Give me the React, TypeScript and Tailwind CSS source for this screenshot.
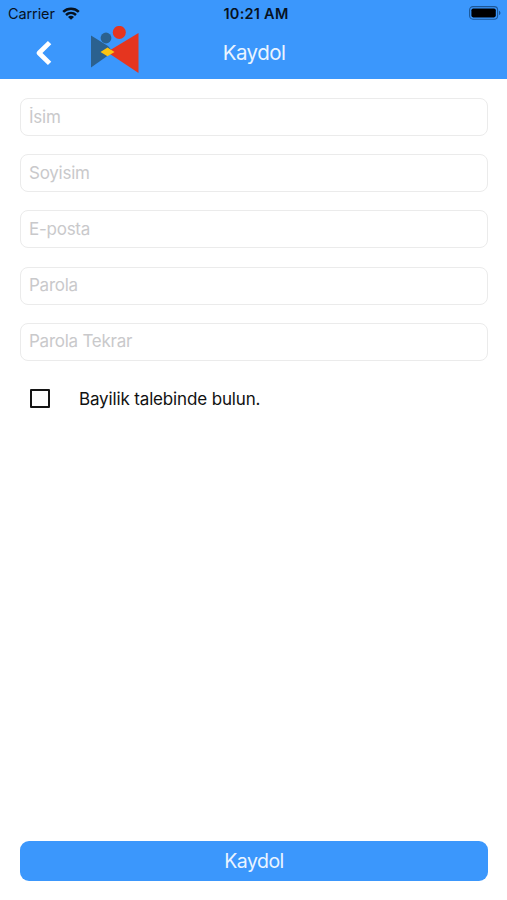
import { useState } from "react"

const fields = [
  { name: "firstName", type: "text", placeholder: "İsim" },
  { name: "lastName", type: "text", placeholder: "Soyisim" },
  { name: "email", type: "email", placeholder: "E-posta" },
  { name: "password", type: "password", placeholder: "Parola" },
  { name: "passwordRepeat", type: "password", placeholder: "Parola Tekrar" },
]

function WifiIcon() {
  return (
    <svg viewBox="0 0 18 13" className="w-[18px] h-[13px]" fill="none" stroke="#07121f" strokeWidth="2.5">
      <path d="M1.2 4.9C5.6 0.7 12.4 0.7 16.8 4.9" />
      <path d="M4 8C6.9 5.3 11.1 5.3 14 8" />
      <path d="M9 12.8L6 9.9C7.6 8.3 10.4 8.3 12 9.9Z" fill="#07121f" stroke="none" />
    </svg>
  )
}

function BatteryIcon() {
  return (
    <svg viewBox="0 0 32 14" className="w-8 h-[14px]">
      <rect x="0.6" y="0.6" width="28" height="12.6" rx="3.4" fill="none" stroke="#1d5796" strokeWidth="1.1" />
      <rect x="2.4" y="2.4" width="24.4" height="9" rx="1.8" fill="#000" />
      <path d="M30 4.7C31.9 5.4 31.9 8.4 30 9.1Z" fill="#1d5796" />
    </svg>
  )
}

function Logo() {
  return (
    <svg viewBox="0 0 48 48" className="w-12 h-12">
      <path d="M0 9.5L17 20L22 26L0 41.5Z" fill="#2b618f" />
      <path d="M47.5 7V47L16 26Z" fill="#e5351f" />
      <circle cx="15" cy="12" r="5.4" fill="#2b618f" />
      <circle cx="28.3" cy="6.4" r="6.5" fill="#e5351f" />
      <path d="M9.5 26L16.5 21.5L23.5 26L16.5 30.2Z" fill="#fdc411" />
    </svg>
  )
}

export default function App() {
  const [dealer, setDealer] = useState(false)

  return (
    <div className="w-full h-[900px] bg-white flex flex-col font-['Inter',sans-serif]">
      <header className="h-[79px] bg-[#3b97fc] flex flex-col shrink-0">
        <div className="h-[26px] grid grid-cols-[1fr_auto_1fr] items-center pl-2 pr-1.5 text-[#07121f]">
          <div className="flex items-center gap-[7px]">
            <span className="pt-0.5 text-[14.5px] tracking-[-0.1px]">Carrier</span>
            <WifiIcon />
          </div>
          <span className="pt-0.5 pl-[3px] text-[14.5px] font-semibold tracking-[0.25px]">10:21 AM</span>
          <div className="flex justify-end">
            <BatteryIcon />
          </div>
        </div>

        <div className="h-[53px] grid grid-cols-[1fr_auto_1fr] items-center">
          <div className="flex items-center pl-[35px]">
            <button type="button" aria-label="Geri">
              <svg viewBox="0 0 18 26" className="w-[18px] h-[26px]" fill="none" stroke="#fff" strokeWidth="4.8" strokeLinejoin="round">
                <path d="M14.6 2.6L4 13L14.6 23.4" />
              </svg>
            </button>
            <div className="ml-[38px] -mt-1.5">
              <Logo />
            </div>
          </div>
          <h1 className="pt-0.5 pl-px text-[20.5px] tracking-[-0.55px] text-[#eaf4ff]">Kaydol</h1>
          <div />
        </div>
      </header>

      <form onSubmit={(e) => e.preventDefault()} className="flex-1 flex flex-col px-5 pt-[19px] pb-[19px]">
        <div className="flex flex-col gap-[18.2px]">
          {fields.map((f) => (
            <input
              key={f.name}
              name={f.name}
              type={f.type}
              placeholder={f.placeholder}
              className="w-[468px] h-[38px] rounded-[8px] border border-[#ebebeb] px-2 pb-px text-[17px] tracking-[-0.25px] text-black placeholder:text-[#c9c9cb] outline-none"
            />
          ))}
        </div>

        <label className="flex items-center mt-[26px] pl-2.5 h-6">
          <input
            type="checkbox"
            checked={dealer}
            onChange={(e) => setDealer(e.target.checked)}
            className="appearance-none w-5 h-[19px] border-[2.5px] border-[#151515] rounded-[1px] checked:bg-[#151515]"
          />
          <span className="ml-[29px] pt-0.5 text-[17px] tracking-[-0.15px] text-[#111]">Bayilik talebinde bulun.</span>
        </label>

        <button
          type="submit"
          className="mt-auto w-[468px] h-10 rounded-[9px] bg-[#3b97fc] pt-px text-[19.5px] tracking-[-0.5px] text-[#eaf4ff]"
        >
          Kaydol
        </button>
      </form>
    </div>
  )
}
